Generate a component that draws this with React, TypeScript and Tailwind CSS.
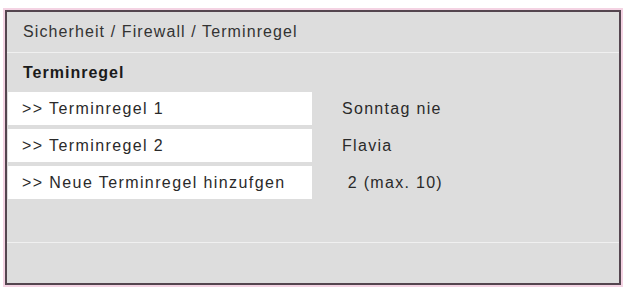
const rows = [
  { label: ">> Terminregel 1", value: "Sonntag nie" },
  { label: ">> Terminregel 2", value: "Flavia" },
  { label: ">> Neue Terminregel hinzufgen", value: " 2 (max. 10)" },
];

export default function App() {
  return (
    <div className="h-[287px] w-[624px] bg-white pl-[5px] pt-[10px] font-['Liberation_Sans',Arial,sans-serif]">
      <div className="flex h-[275px] w-[616px] flex-col border-2 border-[#54454f] bg-[#dddddd] shadow-[0_0_0_2px_#f4d3e3]">
        <div className="flex h-[40px] items-center pl-[16px] text-[16px] tracking-[1.1px] text-[#333333]">
          Sicherheit / Firewall / Terminregel
        </div>
        <div className="h-px bg-[#f0f0f0]" />
        <div className="flex h-[39px] items-center pl-[16px] text-[16px] font-bold tracking-[1px] text-[#1a1a1a]">
          Terminregel
        </div>
        <div className="flex flex-col gap-[4px]">
          {rows.map((r) => (
            <div key={r.label} className="flex h-[33px] items-center">
              <div className="ml-px flex h-full w-[304px] items-center bg-white pl-[14px] text-[16px] tracking-[1.4px] text-[#2a2a2a]">
                {r.label}
              </div>
              <div className="whitespace-pre pl-[30px] text-[16px] tracking-[1.3px] text-[#2a2a2a]">{r.value}</div>
            </div>
          ))}
        </div>
        <div className="h-[43px]" />
        <div className="h-px bg-[#f0f0f0]" />
        <div className="flex-1" />
      </div>
    </div>
  );
}
